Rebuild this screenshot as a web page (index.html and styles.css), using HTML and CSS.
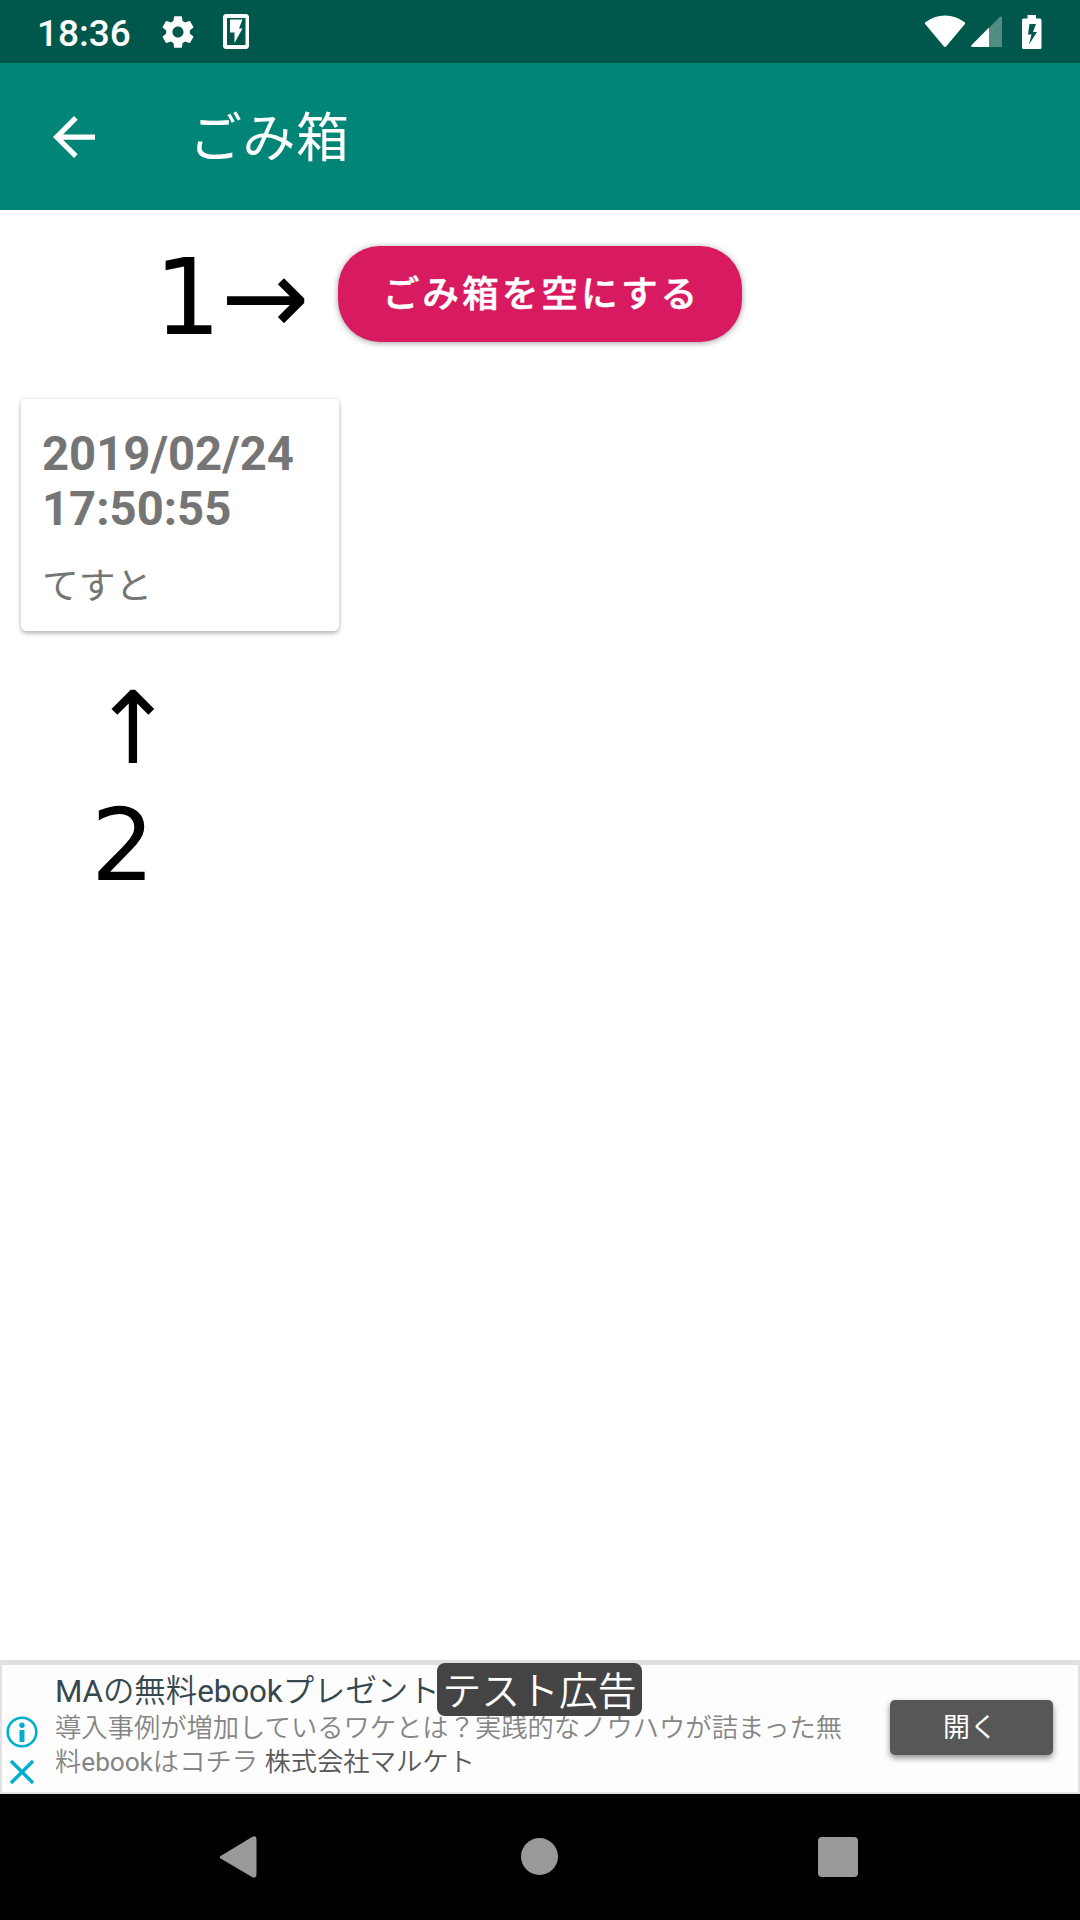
FILE: index.html
```html
<!DOCTYPE html>
<html lang="ja">
<head>
<meta charset="utf-8">
<title>ごみ箱</title>
<link rel="stylesheet" href="styles.css">
</head>
<body>
<div class="screen">
  <header class="status-bar">
    <span class="clock">18:36</span>
    <svg class="icon-gear" width="38" height="38" viewBox="0 0 24 24"><path fill="#fff" d="M19.43 12.98c.04-.32.07-.64.07-.98s-.03-.66-.07-.98l2.11-1.65c.19-.15.24-.42.12-.64l-2-3.46c-.12-.22-.39-.3-.61-.22l-2.49 1c-.52-.4-1.08-.73-1.69-.98l-.38-2.65C14.46 2.18 14.25 2 14 2h-4c-.25 0-.46.18-.49.42l-.38 2.65c-.61.25-1.17.59-1.69.98l-2.49-1c-.23-.09-.49 0-.61.22l-2 3.46c-.13.22-.07.49.12.64l2.11 1.65c-.04.32-.07.65-.07.98s.03.66.07.98l-2.11 1.65c-.19.15-.24.42-.12.64l2 3.46c.12.22.39.3.61.22l2.49-1c.52.4 1.08.73 1.69.98l.38 2.65c.03.24.24.42.49.42h4c.25 0 .46-.18.49-.42l.38-2.65c.61-.25 1.17-.59 1.69-.98l2.49 1c.23.09.49 0 .61-.22l2-3.46c.12-.22.07-.49-.12-.64l-2.11-1.65zM12 15.5c-1.93 0-3.5-1.57-3.5-3.5s1.57-3.5 3.5-3.5 3.5 1.57 3.5 3.5-1.57 3.5-3.5 3.5z"/></svg>
    <svg class="icon-device" width="26" height="35" viewBox="0 0 26 35"><path fill="#fff" fill-rule="evenodd" d="M2 0H24L26 2V33L24 35H2L0 33V2ZM4 4V31H22.500V4Z"/><path fill="#fff" d="M7 5.500H19.500L16 14.500H19.500L11.500 29V18.500H7Z"/></svg>
    <span class="spacer"></span>
    <svg class="icon-wifi" width="42" height="33" viewBox="0 0 42 33"><path fill="#fff" d="M1 7.500Q10 .5 21 .5T41 7.500Q41.500 8.500 40.500 9.500L22.500 31Q21 33 19.500 31L1.500 9.500Q.5 8.500 1 7.500Z"/></svg>
    <svg class="icon-signal" width="31" height="31" viewBox="0 0 31 31"><path fill="#fff" opacity=".32" d="M18 12 29 .7Q31 0 31 2V31H18Z"/><path fill="#fff" d="M18 11.500V31H1Q-.5 30.500 .7 29Z"/></svg>
    <svg class="icon-battery" width="20" height="34" viewBox="0 0 20 34"><path fill="#fff" fill-rule="evenodd" d="M5.500 0H14V3.500H18Q19.500 3.500 19.500 5V32.500Q19.500 34 18 34H1.500Q0 34 0 32.500V5Q0 3.500 1.500 3.500H5.500ZM7.500 9 6 19.500H9.500L7 29.500 15 17H11L14 9Z"/></svg>
  </header>
  <div class="app-bar">
    <svg width="42" height="42" viewBox="0 0 16 16"><path fill="#fff" d="M16 7H3.830l5.590-5.590L8 0 0 8l8 8 1.410-1.410L3.830 9H16z"/></svg>
    <h1>ごみ箱</h1>
  </div>
  <main>
    <button class="empty-button">ごみ箱を空にする</button>
    <article class="card">
      <h2>2019/02/24<br>17:50:55</h2>
      <p>てすと</p>
    </article>
    <div class="note note-button">1→</div>
    <div class="note note-card-arrow">↑</div>
    <div class="note note-card-number">2</div>
  </main>
  <aside class="ad">
    <div class="ad-controls">
      <svg width="32" height="32" viewBox="0 0 32 32"><circle cx="16" cy="16" r="14.300" fill="none" stroke="#00aecd" stroke-width="2.600"/><circle cx="16" cy="9.300" r="2.700" fill="#00aecd"/><path d="M13.500 14H18.500V26H13.500Z" fill="#00aecd"/></svg>
      <svg width="26" height="26" viewBox="0 0 26 26"><path d="M2 2 24 24M24 2 2 24" stroke="#00aecd" stroke-width="3.400"/></svg>
    </div>
    <div class="ad-copy">
      <div class="ad-title"><span class="latin">MA</span>の無料<span class="latin">ebook</span>プレゼント</div>
      <div class="ad-line">導入事例が増加しているワケとは？実践的なノウハウが詰まった無</div>
      <div class="ad-line">料<span class="latin">ebook</span>はコチラ <span class="sponsor">株式会社マルケト</span></div>
    </div>
    <button class="ad-button">開く</button>
    <div class="ad-badge">テスト広告</div>
  </aside>
  <nav class="nav-bar">
    <svg class="nav-back" width="38" height="44" viewBox="0 0 38 44"><path d="M2.500 20.500 33 2Q37.500 0 37.500 4V39Q37.500 44 33 42L2.500 24Q-1 22 2.500 20.500Z" fill="#999"/></svg>
    <span class="nav-home"></span>
    <span class="nav-recent"></span>
  </nav>
</div>
</body>
</html>
```
FILE: styles.css
```css
* { box-sizing: border-box; }

body {
  margin: 0;
  background: #fff;
  font-family: Roboto, "Noto Sans CJK JP", sans-serif;
}

svg { display: block; flex: none; }
h1, h2, p { margin: 0; }
button { border: 0; padding: 0; font-family: inherit; color: #fff; }

.screen {
  display: flex;
  flex-direction: column;
  width: 1080px;
  height: 1920px;
  overflow: hidden;
}

.status-bar {
  display: flex;
  align-items: center;
  flex: none;
  height: 63px;
  padding: 0 38px 0 37px;
  background: #00574b;
}
.clock {
  width: 122px;
  color: #fff;
  font-size: 37px;
  font-weight: 500;
  line-height: 44px;
  padding-top: 4px;
}
.icon-device { margin-left: 26px; }
.spacer { flex: 1; }
.icon-signal { margin-left: 5px; }
.icon-battery { margin-left: 20px; }

.app-bar {
  display: flex;
  align-items: center;
  flex: none;
  height: 147px;
  padding: 0 53px;
  gap: 94px;
  background: #008577;
  color: #fff;
}
.app-bar h1 {
  padding-top: 5px;
  font-size: 53px;
  font-weight: 400;
  letter-spacing: .5px;
  line-height: 76px;
}

main {
  position: relative;
  display: flex;
  flex-direction: column;
  flex: 1;
  padding: 36px 21px;
  background: #fff;
}
.empty-button {
  align-self: center;
  width: 404px;
  height: 96px;
  padding: 2px 0 0 3px;
  border-radius: 42px;
  background: #d81b60;
  box-shadow: 0 1px 6px rgba(0, 0, 0, .38);
  font-size: 36.75px;
  font-weight: 500;
  -webkit-text-stroke: .5px #fff;
  letter-spacing: 2.9px;
  line-height: 54px;
}
.card {
  width: 318px;
  height: 232px;
  margin-top: 57px;
  padding: 28px 21px;
  border-radius: 5px;
  background: #fff;
  box-shadow: 0 2px 5px rgba(0, 0, 0, .32);
  color: #757575;
}
.card h2 {
  font-size: 47.25px;
  font-weight: 700;
  line-height: 55px;
}
.card p {
  margin-top: 23px;
  font-size: 36.75px;
  line-height: 54px;
}

.note {
  position: absolute;
  color: #000;
  font-family: "DejaVu Sans", sans-serif;
  font-size: 100px;
  line-height: 120px;
  white-space: nowrap;
}
.note-button { left: 154px; top: 28px; font-size: 105.5px; }
.note-card-arrow { left: 91px; top: 459px; }
.note-card-number { left: 91px; top: 576px; }

.ad {
  position: relative;
  display: flex;
  flex: none;
  height: 134px;
  border: 2px solid #e2e2e2;
  border-top: 5px solid #e0e0e0;
  background: #fdfdfd;
}
.ad-controls {
  display: flex;
  flex-direction: column;
  align-items: center;
  gap: 11px;
  width: 53px;
  padding: 51px 13px 0 0;
}
.ad-copy {
  flex: 1;
  padding-top: 6px;
  white-space: nowrap;
  font-weight: 350;
}
.ad-title {
  height: 41px;
  color: #37474f;
  font-size: 31.4px;
  line-height: 42px;
}
.ad-line {
  height: 34px;
  color: #858585;
  font-size: 26.3px;
  line-height: 33px;
}
/* Regular is the closest match to the weight of the kana beside it */
.latin { font-weight: 400; letter-spacing: -.1px; }
.sponsor { color: #585858; }
.ad-button {
  width: 163px;
  height: 55px;
  margin: 35px 25px 0 0;
  padding-right: 3px;
  border-radius: 5px;
  background: #575757;
  box-shadow: 0 3px 6px rgba(0, 0, 0, .45);
  font-size: 27px;
  line-height: 40px;
}
.ad-badge {
  position: absolute;
  left: 435px;
  top: -2px;
  width: 205px;
  height: 53px;
  border-radius: 8px;
  background: #444;
  color: #fff;
  font-size: 38.8px;
  font-weight: 350;
  line-height: 57px;
  text-align: center;
}

.nav-bar {
  display: flex;
  align-items: center;
  flex: none;
  height: 126px;
  padding-left: 219px;
  padding-bottom: 1px;
  background: #000;
}
.nav-home {
  width: 37px;
  height: 37px;
  margin-left: 264px;
  border-radius: 50%;
  background: #999;
}
.nav-recent {
  width: 40px;
  height: 40px;
  margin-left: 260px;
  border-radius: 4px;
  background: #999;
}
```
